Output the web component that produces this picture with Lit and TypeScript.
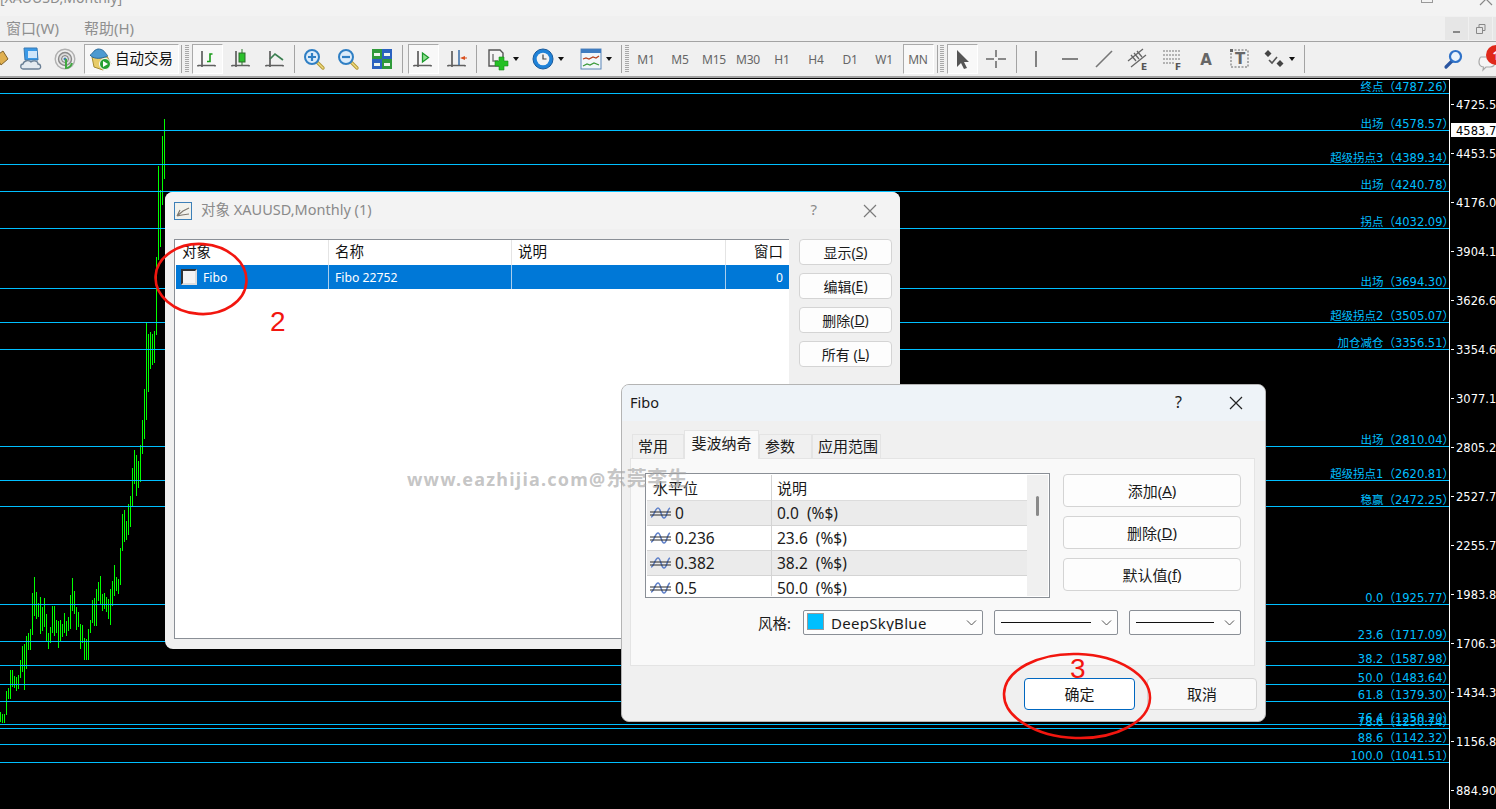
import { html, css, svg, LitElement } from 'lit';
import { customElement } from 'lit/decorators.js';

const UI_FONT = css`"Noto Sans", "Noto Sans CJK SC", sans-serif`;

// axes drawn behind most of the chart toolbar icons
const axes = svg`<path d="M6 3v16M2 17.5h17M2 17v1.5M19 17v1.5" fill="none" stroke="#5f5f5f" stroke-width="1.7"/>`;

const icon = (body: unknown, w = 22, h = 22) =>
    html`<svg width=${w} height=${h} viewBox="0 0 ${w} ${h}">${body}</svg>`;

const magnifier = (sign: string) => svg`
    <path d="M14 14l6 6" stroke="#b59a3a" stroke-width="3.4" stroke-linecap="round"/>
    <path d="M14 14l6 6" stroke="#f0dc80" stroke-width="1.4" stroke-linecap="round"/>
    <circle cx="9" cy="9" r="7" fill="#dcecfa" stroke="#2f7fc4" stroke-width="2"/>
    <path d=${sign} stroke="#2f7fc4" stroke-width="2.2"/>`;

const icons = {
    diamond: icon(svg`<path d="M-4 8L3 3l5 8-7 6z" fill="#e0b050" stroke="#80612a"/>`, 14),
    cloud: icon(svg`
        <path d="M4 0h13l1 12H5z" fill="#3a9ae8" stroke="#3a78b0"/>
        <path d="M8 3h9v7H8z" fill="#cfe6fa"/>
        <path d="M3 21c-3 0-3-5 0-5 1-4 6-4 8-2 3-2 7-1 7 2 3 0 4 5 0 5z" fill="#e4eaf0" stroke="#6a7f95" stroke-width="1.3"/>`),
    radar: icon(svg`
        <circle cx="11" cy="11" r="9.800" fill="#eeeeee" stroke="#b0b0b0" stroke-width="1.4"/>
        <circle cx="11" cy="11" r="6.500" fill="#dadada" stroke="#8a8a8a" stroke-width="1.4"/>
        <circle cx="11" cy="11" r="3.400" fill="#e8e8e8" stroke="#777"/>
        <circle cx="11" cy="11" r="1.500" fill="#3f7fb0"/>
        <path d="M12 11v9c3 0 5-2 6-5" fill="none" stroke="#3fa83f" stroke-width="2"/>`),
    auto: icon(svg`
        <path d="M3 10l15-1 4 8-8 6-9-3z" fill="#e8cc68" stroke="#a58c34"/>
        <path d="M1 8c2 0 3-5 8-6 5 0 7 3 8 5 2 1 2 3-1 3-5 2-12 2-15-2z" fill="#4d9ad0" stroke="#2b6a9a"/>
        <circle cx="16" cy="17" r="5.500" fill="#25a030" stroke="#fff"/>
        <path d="M14 14l5 3-5 3z" fill="#fff"/>`, 23, 24),
    bars: icon(svg`${axes}<path d="M11 13.500h3V6h2.500" fill="none" stroke="#1a9a1a" stroke-width="1.600"/>`),
    candle: icon(svg`${axes}<path d="M12 1v16" stroke="#2c7a2c"/><rect x="9" y="5" width="6" height="9" fill="#2cc02c" stroke="#2c6a2c"/>`),
    line: icon(svg`${axes}<path d="M6 11l5-5 8 6" fill="none" stroke="#3a7f50" stroke-width="1.700"/>`),
    zoomIn: icon(magnifier('M5 9h8M9 5v8')),
    zoomOut: icon(magnifier('M5 9h8')),
    tile: icon(svg`
        <rect x="1" y="1" width="10" height="10" fill="#2f9a3a"/><rect x="11" y="1" width="10" height="10" fill="#2a62c0"/>
        <rect x="1" y="11" width="10" height="10" fill="#2a62c0"/><rect x="11" y="11" width="10" height="10" fill="#2f9a3a"/>
        <path d="M3 5h6v3H3zM13 5h6v3h-6zM3 15h6v3H3zM13 15h6v3h-6z" fill="#eef6ee"/>`),
    autoScroll: icon(svg`${axes}<path d="M10.500 5v9l6-4.500z" fill="#8fe08f" stroke="#1c9a2c" stroke-width="1.300"/>`),
    shift: icon(svg`${axes}<path d="M13 2v15" stroke="#2a62a0" stroke-width="1.400"/><path d="M14 10l5-2v1.500h2v1h-2V12z" fill="#d9501f"/>`),
    newChart: icon(svg`
        <path d="M2 2h11l3 3v13H2z" fill="#f4f4f4" stroke="#555" stroke-width="1.400"/>
        <path d="M6 6v7h5" fill="none" stroke="#777" stroke-width="1.400"/>
        <path d="M12 9h5v4h4v5h-4v4h-5v-4H8v-5h4z" fill="#25c025" stroke="#1a8a1a" stroke-width=".6"/>`),
    clock: icon(svg`
        <circle cx="11" cy="11" r="10" fill="#1f82d8" stroke="#1a5a9a"/>
        <circle cx="11" cy="11" r="6.300" fill="#f2f2f2"/>
        <path d="M11 6.500V11h3.500" fill="none" stroke="#444" stroke-width="1.200"/>`),
    template: icon(svg`
        <rect x="1" y="1" width="20" height="20" fill="#f2f6fa" stroke="#5a86b8"/>
        <rect x="1" y="1" width="20" height="4" fill="#3f7cc0"/>
        <path d="M3 11l3-1 3 1 4-2 3 1 3-2" fill="none" stroke="#b5401c" stroke-width="1.300"/>
        <path d="M3 18l4-2 3 1 4-2 5 2" fill="none" stroke="#3a9a3a" stroke-width="1.300"/>`),
    cursor: icon(svg`<path d="M6 2v17l4-4 3 6 3-1-3-6h5z" fill="#555"/>`),
    cross: icon(svg`<path d="M11 2v7M11 13v7M1 11h8M13 11h8" stroke="#666" stroke-width="1.500"/>`),
    vline: icon(svg`<path d="M11 3v16" stroke="#666" stroke-width="1.600"/>`),
    hline: icon(svg`<path d="M3 11h16" stroke="#666" stroke-width="1.600"/>`),
    trend: icon(svg`<path d="M3 19L19 3" stroke="#777" stroke-width="1.600"/>`),
    channel: icon(svg`
        <path d="M1 13L16 1M4 19L19 7M4 7l5 6M7 5l5 6M10 3l5 6" fill="none" stroke="#666" stroke-width="1.300"/>
        <text x="14" y="22" class="mini">E</text>`),
    fibo: icon(svg`
        <path d="M2 3h17M2 7h17M2 11h17M2 15h11" stroke="#777" stroke-dasharray="2 1"/>
        <text x="14" y="22" class="mini">F</text>`),
    letter: icon(svg`<text x="11" y="17" text-anchor="middle" class="big">A</text>`),
    textBox: icon(svg`
        <rect x="2" y="2" width="17" height="17" fill="none" stroke="#666" stroke-dasharray="2 1.500"/>
        <rect x="1" y="1" width="3" height="3" fill="#666"/>
        <text x="11" y="16" text-anchor="middle" class="big">T</text>`),
    arrows: icon(svg`
        <path d="M5 2l3.500 3.500L5 9 1.500 5.500zM17 12l3.500 3.500L17 19l-3.500-3.500z" fill="#444"/>
        <path d="M6 12l3 3 5-6" fill="none" stroke="#555" stroke-width="1.600"/>`),
    search: icon(svg`
        <path d="M10 13l-6 6" stroke="#2a55a0" stroke-width="3.200" stroke-linecap="round"/>
        <circle cx="13.500" cy="8.500" r="5.500" fill="#eaf3fb" stroke="#2f72c8" stroke-width="2.200"/>`),
    bubble: icon(svg`
        <path d="M3 3h9c3 0 5 2 5 5s-2 5-5 5H8l-3 3 .5-3C2 13 1 10 1 8s1-5 2-5z" fill="#f5f5f5" stroke="#a8a8a8" stroke-width="1.200"/>`, 18, 17),
};

const winClose = (color: string) =>
    html`<svg width="14" height="14" viewBox="0 0 14 14"><path d="M1 1l12 12M13 1L1 13" fill="none" stroke=${color} stroke-width="1.200"/></svg>`;

const buttonStyles = css`
    .push {
        display: flex;
        align-items: center;
        justify-content: center;
        box-sizing: border-box;
        background: #fdfdfd;
        border: 1px solid #d4d4d4;
        border-radius: 4px;
        color: #1a1a1a;
        font-size: 14px;
        font-family: ${UI_FONT};
        padding-bottom: 1px;
    }
`;

const TIMEFRAMES = ['M1', 'M5', 'M15', 'M30', 'H1', 'H4', 'D1', 'W1'];

@customElement('mt-toolbar')
export class MtToolbar extends LitElement {
    static styles = css`
        :host {
            display: flex;
            flex-direction: column;
            height: 78px;
            background: #f0f0f0;
            font-family: ${UI_FONT};
            overflow: hidden;
        }
        .title {
            height: 16px;
            background: #f3f3f3;
            position: relative;
            overflow: hidden;
        }
        .title span {
            display: block;
            width: 113px;
            margin-top: -12px;
            text-align: right;
            font-size: 14px;
            line-height: 20px;
            color: #8c8c8c;
            white-space: nowrap;
        }
        .title .wc {
            position: absolute;
            top: -11px;
        }
        .wc.max { left: 1421px; width: 10px; height: 12px; border: 1px solid #999; }
        .wc.close { left: 1479px; }
        .menu {
            height: 25px;
            display: flex;
            align-items: center;
            font-size: 15px;
            color: #8f8f8f;
            position: relative;
        }
        .menu span { width: 72px; padding: 0 0 2px 6px; }
        .mdi {
            margin-left: auto;
            display: flex;
            gap: 1px;
            margin-right: -20px;
        }
        .mdi div {
            width: 23px;
            height: 23px;
            background: #e6e6e6;
            display: flex;
            align-items: center;
            justify-content: center;
        }
        .bar {
            height: 34px;
            border-top: 1px solid #a3a3a3;
            border-bottom: 2px solid #a3a3a3;
            display: flex;
            align-items: stretch;
            box-sizing: content-box;
        }
        .btn {
            width: 34px;
            flex: none;
            position: relative;
            display: flex;
            align-items: center;
            justify-content: center;
            font-size: 12px;
            color: #666;
            letter-spacing: -0.2px;
        }
        .btn svg { display: block; overflow: visible; }
        .btn.on::before {
            content: '';
            position: absolute;
            inset: 2px 1px 2px 2px;
            background: #f8f8f8;
            border: 1px solid;
            border-color: #aaa #fff #fff #aaa;
        }
        .btn > * { position: relative; }
        .btn.tip { width: 14px; justify-content: flex-start; overflow: hidden; }
        .btn.dd { width: auto; justify-content: flex-start; }
        .caret {
            width: 0;
            height: 0;
            margin-left: 4px;
            border: 3.5px solid transparent;
            border-top: 4px solid #111;
            border-bottom: 0;
        }
        .auto {
            flex: none;
            width: 95px;
            margin: 2px 0 2px 2px;
            box-sizing: border-box;
            background: #f8f8f8;
            border: 1px solid;
            border-color: #aaa #fff #fff #aaa;
            display: flex;
            align-items: center;
            gap: 3px;
            padding-left: 4px;
            font-size: 14.500px;
            color: #111;
        }
        .auto span { padding-bottom: 3px; }
        .sep {
            flex: none;
            display: flex;
            justify-content: center;
        }
        .sep::before {
            content: '';
            width: 1px;
            margin: 3px 0;
            background: #a3a3a3;
        }
        .grip {
            flex: none;
            width: 4px;
            margin: 3px 1px;
            background: repeating-linear-gradient(#a8a8a8 0 1px, transparent 1px 2px);
        }
        .spacer { flex: 1; }
        .chat { width: 26px; padding-left: 8px; box-sizing: border-box; justify-content: flex-start; padding-top: 6px; }
        .badge {
            position: absolute;
            left: 16px;
            top: 3px;
            width: 20px;
            height: 20px;
            border-radius: 50%;
            background: #e0281a;
            color: #fff;
            font-size: 13px;
            font-weight: bold;
            display: flex;
            align-items: center;
            justify-content: center;
        }
        .mini { font: bold 9px "DejaVu Sans", sans-serif; fill: #555; }
        .big { font: bold 15px "DejaVu Sans", sans-serif; fill: #666; }
    `;

    private btn(i: unknown, on = false) {
        return html`<div class="btn ${on ? 'on' : ''}">${i}</div>`;
    }

    private drop(i: unknown, left: number, width: number) {
        return html`<div class="btn dd" style="padding-left:${left}px;width:${width - left}px">${i}<div class="caret"></div></div>`;
    }

    private sep(w: number) {
        return html`<div class="sep" style="width:${w}px"></div>`;
    }

    render() {
        return html`
            <div class="title">
                <span>[XAUUSD,Monthly]</span>
                <div class="wc max"></div>
                <div class="wc close">${winClose('#888')}</div>
            </div>
            <div class="menu">
                <span>窗口(W)</span><span>帮助(H)</span>
                <div class="mdi">
                    <div><svg width="10" height="10"><path d="M1 8h7" stroke="#888" stroke-width="2"/></svg></div>
                    <div><svg width="10" height="10"><path d="M.5 3.500h6v6h-6zM3 3V.5h6v6H7" fill="none" stroke="#888"/></svg></div>
                    <div></div>
                </div>
            </div>
            <div class="bar">
                <div class="btn tip">${icons.diamond}</div>
                ${this.btn(icons.cloud)}${this.btn(icons.radar)}
                <div class="auto">${icons.auto}<span>自动交易</span></div>
                ${this.sep(5)}<div class="grip"></div>
                ${this.btn(icons.bars, true)}${this.btn(icons.candle)}${this.btn(icons.line)}
                ${this.sep(5)}
                ${this.btn(icons.zoomIn)}${this.btn(icons.zoomOut)}${this.btn(icons.tile)}
                ${this.sep(7)}
                ${this.btn(icons.autoScroll, true)}${this.btn(icons.shift)}
                ${this.sep(4)}
                ${this.drop(icons.newChart, 9, 44)}${this.drop(icons.clock, 10, 48)}${this.drop(icons.template, 10, 48)}
                ${this.sep(7)}<div class="grip" style="margin-left:0;margin-right:0"></div>
                ${TIMEFRAMES.map((t) => this.btn(html`<span>${t}</span>`))}
                ${this.btn(html`<span>MN</span>`, true)}
                ${this.sep(4)}<div class="grip"></div>
                ${this.btn(icons.cursor, true)}${this.btn(icons.cross)}
                ${this.sep(6)}
                ${this.btn(icons.vline)}${this.btn(icons.hline)}${this.btn(icons.trend)}
                ${this.btn(icons.channel)}${this.btn(icons.fibo)}${this.btn(icons.letter)}${this.btn(icons.textBox)}
                ${this.drop(icons.arrows, 6, 43)}
                ${this.sep(8)}
                <div class="spacer"></div>
                ${this.btn(icons.search)}
                <div class="btn chat">${icons.bubble}<div class="badge">1</div></div>
            </div>
        `;
    }
}

// top and bottom pixel of each monthly bar, two pixels apart
const BARS: [number, number][] = [
    [712, 722], [714, 723], [714, 723], [691, 715], [688, 699], [670, 699], [670, 687], [676, 688], [677, 691], [675, 689],
    [660, 678], [646, 672], [644, 690], [636, 669], [633, 650], [629, 650], [593, 635], [577, 616], [592, 619], [603, 617],
    [597, 634], [607, 631], [598, 627], [614, 641], [633, 649], [627, 643], [606, 633], [606, 636], [620, 633], [621, 648],
    [620, 641], [624, 637], [613, 633], [621, 636], [617, 631], [595, 629], [578, 611], [591, 614], [607, 630], [612, 627],
    [624, 649], [625, 643], [638, 660], [639, 660], [629, 660], [620, 633], [600, 623], [598, 626], [589, 626], [582, 601],
    [576, 604], [594, 611], [593, 609], [597, 612], [599, 619], [589, 625], [581, 606], [565, 596], [577, 591], [579, 594],
    [548, 585], [514, 551], [510, 542], [521, 540], [504, 535], [496, 527], [468, 506], [450, 484], [455, 496], [461, 488],
    [445, 482], [420, 454], [389, 439], [323, 420], [334, 392], [332, 369], [334, 365], [331, 363], [257, 335], [166, 260],
    [190, 247], [136, 205], [119, 179],
];

const LEVELS: [number, string][] = [
    [93, '终点（4787.26）'], [130, '出场（4578.57）'], [164, '超级拐点3（4389.34）'], [191, '出场（4240.78）'],
    [228, '拐点（4032.09）'], [288, '出场（3694.30）'], [322, '超级拐点2（3505.07）'], [349, '加仓减仓（3356.51）'],
    [446, '出场（2810.04）'], [480, '超级拐点1（2620.81）'], [506, '稳赢（2472.25）'], [604, '0.0（1925.77）'],
    [641, '23.6（1717.09）'], [665, '38.2（1587.98）'], [684, '50.0（1483.64）'], [701, '61.8（1379.30）'],
    [724, '76.4（1250.20）'], [728, '78.6（1230.74）'], [744, '88.6（1142.32）'], [762, '100.0（1041.51）'],
];

const PRICES = ['4725.50', '4453.50', '4176.00', '3904.10', '3626.60', '3354.60', '3077.10', '2805.20', '2527.70',
    '2255.70', '1983.80', '1706.30', '1434.30', '1156.80', '884.90'];

@customElement('price-chart')
export class PriceChart extends LitElement {
    static styles = css`
        :host { display: block; height: 731px; background: #000; }
        svg { display: block; }
        rect { shape-rendering: crispEdges; }
        text { font-family: "DejaVu Sans", "Noto Sans CJK SC", sans-serif; font-size: 11.500px; }
        .level { fill: #00bfff; text-anchor: end; }
        .price { fill: #fff; }
        .now { fill: #000; }
    `;

    render() {
        return html`
            <svg width="1496" height="731" viewBox="0 78 1496 731">
                <rect x="0" y="79" width="1450" height="1" fill="#fff"></rect>
                ${BARS.map(([a, b], i) => svg`<rect x=${i * 2} y=${a} width="1" height=${b - a} fill="#0f0"></rect>`)}
                ${LEVELS.map(([y, t]) => svg`
                    <rect x="0" y=${y} width="1449" height="1" fill="#00bfff"></rect>
                    <text class="level" x="1454" y=${y - 2}>${t}</text>`)}
                <rect x="1449" y="79" width="47" height="730" fill="#000"></rect>
                <rect x="1449" y="79" width="1" height="730" fill="#fff"></rect>
                ${PRICES.map((p, i) => svg`
                    <rect x="1451" y=${104 + i * 49} width="3" height="1" fill="#fff"></rect>
                    <text class="price" x="1456" y=${109 + i * 49}>${p}</text>`)}
                <rect x="1451" y="123" width="45" height="14" fill="#fff"></rect>
                <text class="now" x="1456" y="135">4583.74</text>
            </svg>
        `;
    }
}

@customElement('objects-dialog')
export class ObjectsDialog extends LitElement {
    static styles = [buttonStyles, css`
        :host {
            display: flex;
            flex-direction: column;
            box-sizing: border-box;
            width: 735px;
            height: 457px;
            background: #f0f0f0;
            border-radius: 8px;
            overflow: hidden;
            font-family: ${UI_FONT};
        }
        .head {
            flex: none;
            height: 37px;
            background: #f3f3f3;
            display: flex;
            align-items: center;
            padding: 0 23px 0 9px;
            font-size: 14.500px;
            color: #8a8a8a;
        }
        .head .name { margin-left: 9px; flex: 1; padding-bottom: 4px; }
        .head .help { margin-right: 46px; font-size: 15px; padding-bottom: 4px; }
        .logo { width: 18px; height: 18px; display: block; }
        .body {
            flex: 1;
            display: flex;
            gap: 10px;
            padding: 10px 8px 10px 9px;
        }
        .list {
            width: 615px;
            box-sizing: border-box;
            background: #fff;
            border: 1px solid #8a8f96;
            border-right: 0;
            padding-left: 1px;
        }
        .row {
            display: grid;
            grid-template-columns: 153px 183px 214px 1fr;
            align-items: center;
        }
        .row > div {
            height: 100%;
            display: flex;
            align-items: center;
            box-sizing: border-box;
            padding-left: 6px;
            border-right: 1px solid #e4e4e4;
        }
        .row > div:last-child { justify-content: flex-end; padding-right: 6px; border: 0; }
        .th { height: 25px; font-size: 14.500px; color: #111; }
        .th > div { padding-bottom: 4px; }
        .sel {
            height: 24px;
            background: #0078d7;
            color: #fff;
            font-size: 12.200px;
        }
        .sel > div { border-right-color: #a9cdec; }
        .sel .check {
            width: 16px;
            height: 16px;
            box-sizing: border-box;
            background: #f4f4f4;
            border: 2px solid;
            border-color: #333 #ddd #ddd #333;
            margin: 0 6px 0 -1px;
        }
        .side {
            width: 93px;
            display: flex;
            flex-direction: column;
            gap: 8px;
        }
        .side .push { height: 26px; }
    `];

    render() {
        return html`
            <div class="head">
                <svg class="logo" viewBox="0 0 18 18">
                    <rect x=".5" y=".5" width="17" height="17" fill="#f2f2ec" stroke="#3d80b8"></rect>
                    <path d="M3 14l6-5 6-3M3 14l5-1 7-1M3 14l3-6" fill="none" stroke="#807a70" stroke-width="1.200"></path>
                </svg>
                <span class="name">对象 XAUUSD,Monthly (1)</span>
                <span class="help">?</span>
                ${winClose('#7a7a7a')}
            </div>
            <div class="body">
                <div class="list">
                    <div class="row th"><div>对象</div><div>名称</div><div>说明</div><div>窗口</div></div>
                    <div class="row sel">
                        <div><span class="check"></span>Fibo</div><div>Fibo 22752</div><div></div><div>0</div>
                    </div>
                </div>
                <div class="side">
                    <div class="push">显示(<u>S</u>)</div>
                    <div class="push">编辑(<u>E</u>)</div>
                    <div class="push">删除(<u>D</u>)</div>
                    <div class="push">所有 (<u>L</u>)</div>
                </div>
            </div>
        `;
    }
}

const FIB_ROWS = [['0', '0.0'], ['0.236', '23.6'], ['0.382', '38.2'], ['0.5', '50.0']];

const levelIcon = html`<svg width="21" height="14" viewBox="0 0 21 14">
    <path d="M1 11C4 11 5 2 8 2s3 10 6 10 3-9 6-10" fill="none" stroke="#5f80c8" stroke-width="1.600"></path>
    <path d="M0 6h21M0 9h21" fill="none" stroke="#2a2a2a" stroke-width="1.100"></path>
</svg>`;

const comboArrow = html`<svg class="arrow" width="11" height="6" viewBox="0 0 11 6"><path d="M1 .5l4.500 4.500L10 .5" fill="none" stroke="#555"></path></svg>`;

@customElement('fibo-dialog')
export class FiboDialog extends LitElement {
    static styles = [buttonStyles, css`
        :host {
            display: flex;
            flex-direction: column;
            box-sizing: border-box;
            width: 645px;
            height: 338px;
            background: #f0f0f0;
            border: 1px solid #b4b4b4;
            border-radius: 8px;
            overflow: hidden;
            font-family: ${UI_FONT};
            color: #1a1a1a;
        }
        .push { font-size: 15px; }
        .head {
            flex: none;
            height: 36px;
            background: #eef3f8;
            display: flex;
            align-items: center;
            padding: 0 22px 0 8px;
            font-size: 14.500px;
        }
        .head .name { flex: 1; padding-bottom: 2px; }
        .head .help { margin-right: 47px; font-size: 16px; padding-bottom: 2px; }
        .tabs {
            flex: none;
            display: flex;
            align-items: flex-end;
            height: 38px;
            padding-left: 10px;
            position: relative;
            z-index: 1;
            margin-bottom: -1px;
            font-size: 15px;
        }
        .tab {
            height: 25px;
            box-sizing: border-box;
            border: 1px solid #e4e4e4;
            border-bottom: 0;
            display: flex;
            align-items: center;
            padding: 0 0 3px 5px;
        }
        .tab.on {
            height: 29px;
            background: #f9f9f9;
            padding: 0 0 6px 0;
            justify-content: center;
        }
        .panel {
            flex: none;
            box-sizing: border-box;
            width: 625px;
            height: 208px;
            margin-left: 8px;
            background: #f9f9f9;
            border: 1px solid #e4e4e4;
            padding: 14px 13px 0 14px;
        }
        .top { display: flex; gap: 13px; height: 125px; }
        .list {
            width: 405px;
            box-sizing: border-box;
            border: 1px solid #8a8f96;
            background: #fff;
            display: flex;
            padding: 1px;
            overflow: hidden;
        }
        .rows { flex: 1; overflow: hidden; font-size: 15.500px; }
        .row {
            display: grid;
            grid-template-columns: 125px 1fr;
            height: 25px;
            box-sizing: border-box;
            border-bottom: 1px solid #d4d4d4;
            align-items: center;
        }
        .row:nth-child(even) { background: #ebebeb; }
        .row.th { height: 26px; font-size: 15px; background: #fff; border-bottom-color: #dcdcdc; }
        .row > div {
            height: 100%;
            display: flex;
            align-items: center;
            gap: 4px;
            padding-left: 3px;
            border-right: 1px solid #d4d4d4;
        }
        .row > div + div { border: 0; padding-left: 5px; white-space: pre; }
        .row.th > div { padding: 0 0 1px 6px; }
        .row.th > div + div { padding-left: 5px; }
        .scroll {
            width: 21px;
            background: #f0f0f0;
            position: relative;
        }
        .thumb {
            position: absolute;
            left: 9px;
            top: 21px;
            width: 3px;
            height: 20px;
            border-radius: 2px;
            background: #8a8a8a;
        }
        .actions {
            width: 178px;
            display: flex;
            flex-direction: column;
            gap: 9px;
            padding-top: 1px;
        }
        .actions .push { height: 33px; }
        .style {
            display: flex;
            align-items: center;
            gap: 11px;
            height: 25px;
            margin-top: 12px;
            justify-content: flex-end;
            font-size: 14.500px;
        }
        .style label { margin-right: 1px; }
        .combo {
            position: relative;
            box-sizing: border-box;
            height: 25px;
            background: #fdfdfd;
            border: 1px solid #8a8f96;
            border-radius: 2px;
            overflow: hidden;
            display: flex;
            align-items: center;
            padding-left: 6px;
        }
        .arrow { position: absolute; right: 5px; top: 9px; }
        .swatch {
            width: 17px;
            height: 17px;
            background: #00bfff;
            border: 1px solid #9a9a9a;
            box-sizing: border-box;
            margin: 0 7px 0 -3px;
            align-self: flex-start;
            margin-top: 2px;
            flex: none;
        }
        /* the descenders of the colour name are cut off, as in the real combo box */
        .blue span {
            display: block;
            height: 20px;
            line-height: 25px;
            align-self: flex-start;
            overflow: hidden;
            font-size: 15px;
            letter-spacing: .3px;
        }
        .stroke { height: 1px; background: #111; margin-right: 26px; flex: 1; margin-top: -1px; }
        .foot {
            flex: 1;
            display: flex;
            justify-content: flex-end;
            gap: 12px;
            padding: 12px 8px 0 0;
        }
        .foot .push { width: 110px; height: 32px; background: #f9f9f9; }
        .foot .push.primary { width: 111px; background: #fff; border: 1.500px solid #0067c0; }
    `];

    render() {
        return html`
            <div class="head">
                <span class="name">Fibo</span>
                <span class="help">?</span>
                ${winClose('#222')}
            </div>
            <div class="tabs">
                <div class="tab" style="width:52px">常用</div>
                <div class="tab on" style="width:75px">斐波纳奇</div>
                <div class="tab" style="width:53px">参数</div>
                <div class="tab" style="width:69px">应用范围</div>
            </div>
            <div class="panel">
                <div class="top">
                    <div class="list">
                        <div class="rows">
                            <div class="row th"><div>水平位</div><div>说明</div></div>
                            ${FIB_ROWS.map(([a, b]) => html`
                                <div class="row"><div>${levelIcon}${a}</div><div>${b}  (%$)</div></div>`)}
                        </div>
                        <div class="scroll"><div class="thumb"></div></div>
                    </div>
                    <div class="actions">
                        <div class="push">添加(<u>A</u>)</div>
                        <div class="push">删除(<u>D</u>)</div>
                        <div class="push">默认值(<u>f</u>)</div>
                    </div>
                </div>
                <div class="style">
                    <label>风格:</label>
                    <div class="combo blue" style="width:180px"><div class="swatch"></div><span>DeepSkyBlue</span>${comboArrow}</div>
                    <div class="combo" style="width:124px"><div class="stroke"></div>${comboArrow}</div>
                    <div class="combo" style="width:112px"><div class="stroke"></div>${comboArrow}</div>
                </div>
            </div>
            <div class="foot">
                <div class="push primary">确定</div>
                <div class="push">取消</div>
            </div>
        `;
    }
}

@customElement('app-root')
export class AppRoot extends LitElement {
    static styles = css`
        :host {
            display: block;
            position: relative;
            width: 1496px;
            height: 809px;
            overflow: hidden;
            background: #000;
        }
        objects-dialog { position: absolute; left: 165px; top: 192px; }
        fibo-dialog { position: absolute; left: 621px; top: 384px; }
        .marks { position: absolute; left: 0; top: 0; pointer-events: none; }
        .marks ellipse { fill: none; stroke: #f2160f; stroke-width: 2.600; }
        .num { font: 28px "Liberation Sans", sans-serif; fill: #f2160f; }
        .watermark {
            position: absolute;
            left: 407px;
            top: 463px;
            font: bold 18px "Noto Sans", "Noto Sans CJK SC", sans-serif;
            letter-spacing: 1.200px;
            color: rgba(165, 165, 165, 0.65);
            white-space: nowrap;
        }
        .watermark span { font-size: 20px; letter-spacing: .5px; }
    `;

    render() {
        return html`
            <mt-toolbar></mt-toolbar>
            <price-chart></price-chart>
            <objects-dialog></objects-dialog>
            <fibo-dialog></fibo-dialog>
            <div class="watermark">www.eazhijia.com@<span>东莞李生</span></div>
            <svg class="marks" width="1496" height="809">
                <ellipse cx="201" cy="279" rx="45.500" ry="35" transform="rotate(4 201 279)"></ellipse>
                <ellipse cx="1077" cy="696" rx="73" ry="42" transform="rotate(2 1077 696)"></ellipse>
                <text class="num" x="270" y="331">2</text>
                <text class="num" x="1070" y="678">3</text>
            </svg>
        `;
    }
}
